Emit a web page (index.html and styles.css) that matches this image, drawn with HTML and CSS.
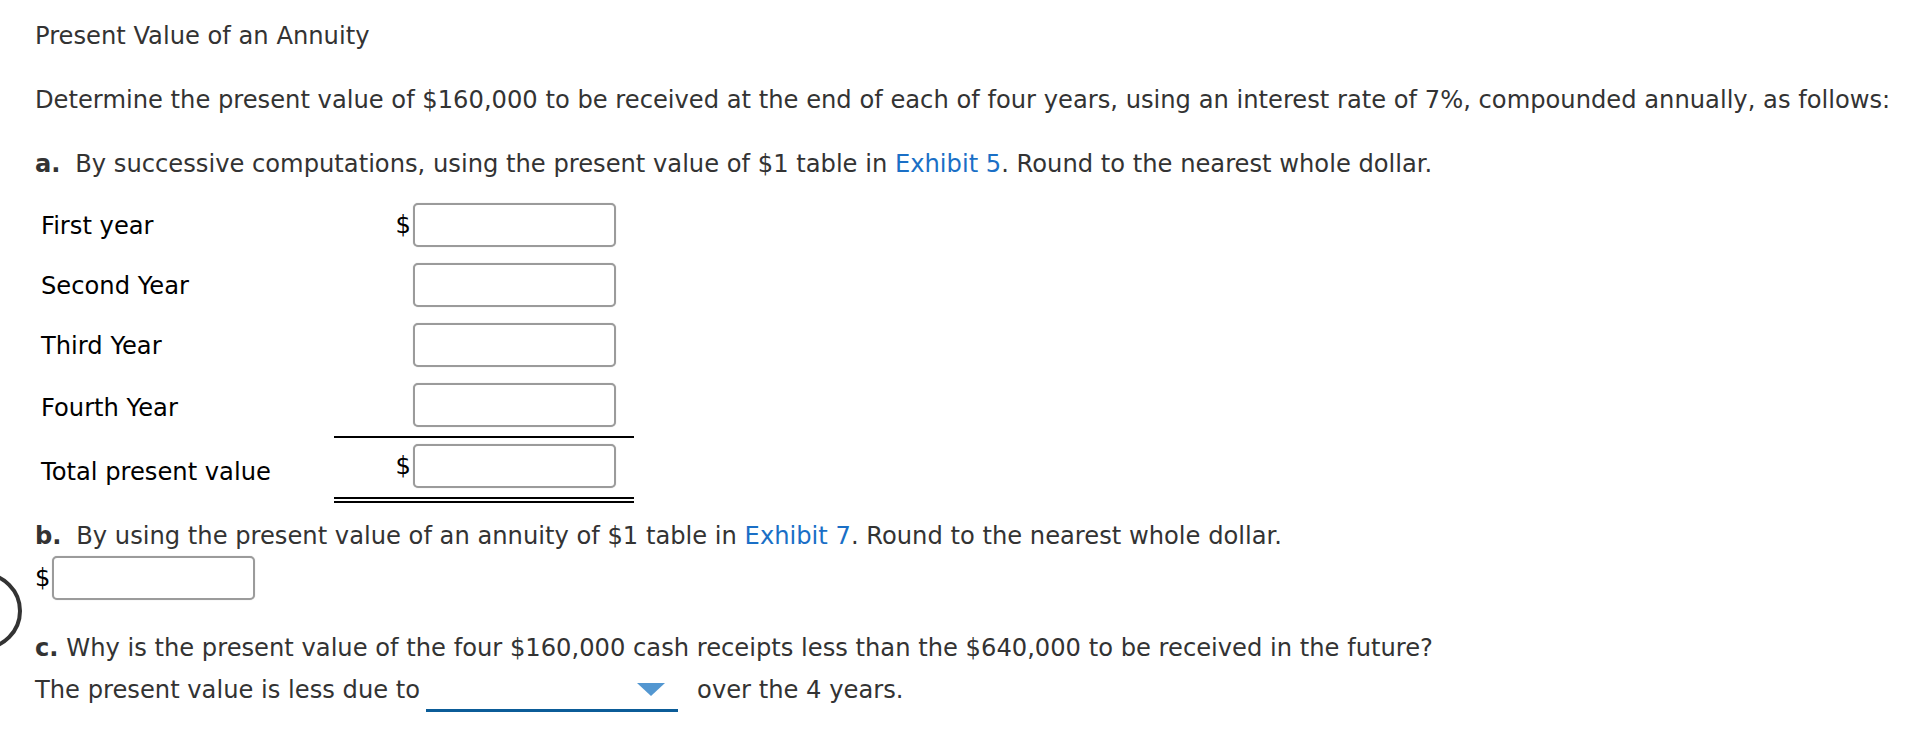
FILE: index.html
```html
<!DOCTYPE html>
<html lang="en">
<head>
<meta charset="utf-8">
<title>Present Value of an Annuity</title>
<link rel="stylesheet" href="styles.css">
</head>
<body>
<div class="ring"></div>
<main class="page">
  <h1 class="title">Present Value of an Annuity</h1>
  <p class="intro">Determine the present value of $160,000 to be received at the end of each of four years, using an interest rate of 7%, compounded annually, as follows:</p>
  <p class="part part-a"><strong class="mark">a.</strong> By successive computations, using the present value of $1 table in <a class="link" href="#">Exhibit 5</a>. Round to the nearest whole dollar.</p>

  <div class="calc">
    <div class="row">
      <div class="label">First year</div>
      <div class="amount"><span class="cur">$</span><span class="field"></span></div>
    </div>
    <div class="row">
      <div class="label">Second Year</div>
      <div class="amount"><span class="field"></span></div>
    </div>
    <div class="row">
      <div class="label">Third Year</div>
      <div class="amount"><span class="field"></span></div>
    </div>
    <div class="row row-sub">
      <div class="label">Fourth Year</div>
      <div class="amount"><span class="field"></span></div>
    </div>
    <div class="row row-total">
      <div class="label">Total present value</div>
      <div class="amount"><span class="cur">$</span><span class="field"></span></div>
    </div>
  </div>

  <p class="part part-b"><strong class="mark">b.</strong> By using the present value of an annuity of $1 table in <a class="link" href="#">Exhibit 7</a>. Round to the nearest whole dollar.</p>
  <div class="answer-b"><span class="cur">$</span><span class="field"></span></div>

  <p class="part part-c"><strong class="mark-c">c.</strong> Why is the present value of the four $160,000 cash receipts less than the $640,000 to be received in the future?</p>
  <p class="sentence">The present value is less due to<span class="select"><svg class="caret" width="28" height="13" viewBox="0 0 28 13"><polygon points="0,0 28,0 14,13" fill="#5397d1"/></svg></span><span class="after">over the 4 years.</span></p>
</main>
</body>
</html>
```

FILE: styles.css
```css
html, body {
  margin: 0;
  padding: 0;
  background: #ffffff;
}

body {
  font-family: "DejaVu Sans", Verdana, sans-serif;
  font-size: 24.2px;
  line-height: 28px;
  color: #333333;
  position: relative;
  overflow: hidden;
  height: 732px;
}

.page {
  padding-left: 35px;
  padding-top: 22px;
}

.title {
  margin: 0;
  font-size: 24.2px;
  font-weight: normal;
  line-height: 28px;
}

.intro {
  margin: 36px 0 0;
  white-space: nowrap;
}

.part {
  margin: 0;
  white-space: nowrap;
}

.part-a {
  margin-top: 36px;
}

.mark {
  font-weight: bold;
  margin-right: 7px;
}

.mark-c {
  font-weight: bold;
}

.link {
  color: #1a6fc6;
  text-decoration: none;
}

.calc {
  margin-top: 17px;
  margin-left: 6px;
  width: 599px;
}

.row {
  display: grid;
  grid-template-columns: 293px 300px;
  align-items: center;
  color: #000000;
}

.label {
  line-height: 28px;
  padding-top: 2px;
}

.amount {
  display: flex;
  align-items: center;
  justify-content: flex-end;
  padding: 8px 18px 8px 0;
}

.row-sub .amount {
  padding-bottom: 9px;
  border-bottom: 2px solid #000000;
}

.row-total .amount {
  padding-top: 6px;
  padding-bottom: 9px;
  border-bottom: 6px double #000000;
}

.cur {
  color: #000000;
  margin-right: 2px;
}

.field {
  display: block;
  width: 203px;
  height: 44px;
  box-sizing: border-box;
  border: 2px solid #9b9b9b;
  border-radius: 5px;
  background: #ffffff;
  box-shadow: 0 0 1px rgba(0, 0, 0, 0.25);
}

.part-b {
  margin-top: 19px;
}

.answer-b {
  display: flex;
  align-items: center;
  margin-top: 6px;
  color: #000000;
}

.answer-b .cur {
  margin-right: 2px;
}

.part-c {
  margin-top: 34px;
}

.sentence {
  margin: 14px 0 0;
  white-space: nowrap;
}

.select {
  display: inline-block;
  position: relative;
  width: 252px;
  height: 30px;
  margin-left: 6px;
  border-bottom: 3px solid #0b5c98;
  vertical-align: -14px;
}

.caret {
  position: absolute;
  right: 13px;
  top: 4px;
  display: block;
}

.after {
  margin-left: 19px;
}

.ring {
  position: absolute;
  left: -56px;
  top: 572px;
  width: 78px;
  height: 78px;
  box-sizing: border-box;
  border: 4px solid #333333;
  border-radius: 50%;
}
```
